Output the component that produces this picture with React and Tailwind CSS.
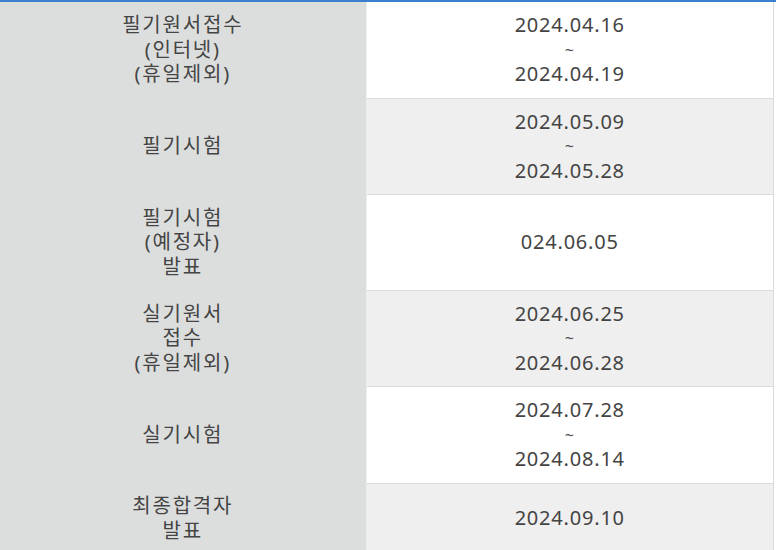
import React from 'react';

// schedule rows: label lines on the left, date lines on the right
const rows = [
  { label: ['필기원서접수', '(인터넷)', '(휴일제외)'], dates: ['2024.04.16', '~', '2024.04.19'] },
  { label: ['필기시험'], dates: ['2024.05.09', '~', '2024.05.28'] },
  { label: ['필기시험', '(예정자)', '발표'], dates: ['024.06.05'] },
  { label: ['실기원서', '접수', '(휴일제외)'], dates: ['2024.06.25', '~', '2024.06.28'] },
  { label: ['실기시험'], dates: ['2024.07.28', '~', '2024.08.14'] },
  { label: ['최종합격자', '발표'], dates: ['2024.09.10'] },
];

const Lines = ({ lines }) => (
  <>
    {lines.map((line, i) => (
      <div key={i} className={line === '~' ? 'text-[16px] text-[#555]' : ''}>
        {line}
      </div>
    ))}
  </>
);

export default function App() {
  return (
    <div
      className="w-[776px] h-[550px] overflow-hidden bg-white border-t-2 border-[#3a7fd0] text-[#444444] text-[20px] leading-[24.5px]"
      style={{ fontFamily: '"Noto Sans", "Noto Sans CJK KR", sans-serif' }}
    >
      <table className="w-[774px] border-collapse">
        <tbody>
          {rows.map((row, i) => (
            <tr key={i}>
              <th className="w-[366px] bg-[#dcdedd] font-normal text-center align-middle py-[11px] border-r border-[#eeeeee] tracking-[1.8px]">
                <Lines lines={row.label} />
              </th>
              <td
                className={`text-center align-middle py-[11px] border-b border-r border-[#dadada] tracking-[0.8px] ${
                  i % 2 === 1 ? 'bg-[#efefef]' : 'bg-white'
                }`}
              >
                <Lines lines={row.dates} />
              </td>
            </tr>
          ))}
        </tbody>
      </table>
    </div>
  );
}
